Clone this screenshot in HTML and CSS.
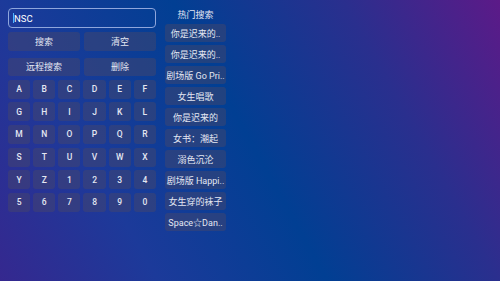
FILE: index.html
```html
<!DOCTYPE html>
<html>

<head>
  <title>搜索</title>
  <link rel="stylesheet" href="styles.css">
</head>

<body>
  <div id="page">
    <div id="leftPanel">
      <div id="searchBox"><span class="caret"></span>NSC</div>
      <div id="actions">
        <button class="btn">搜索</button>
        <button class="btn">清空</button>
        <button class="btn">远程搜索</button>
        <button class="btn">删除</button>
      </div>
      <div id="keyboard"></div>
    </div>
    <div id="hotPanel">
      <div id="hotTitle">热门搜索</div>
      <ul id="hotList"></ul>
    </div>
  </div>
  <script>
    var keys = 'ABCDEFGHIJKLMNOPQRSTUVWXYZ1234567890'.split('');
    var keyboard = document.getElementById('keyboard');
    keys.forEach(k => {
      var b = document.createElement('button');
      b.className = 'btn key';
      b.textContent = k;
      keyboard.appendChild(b);
    });

    var hot = ['你是迟来的..', '你是迟来的..', '剧场版 Go Pri..', '女生唱歌', '你是迟来的',
      '女书：潮起', '溺色沉沦', '剧场版 Happi..', '女生穿的袜子', 'Space☆Dan..'];
    var hotList = document.getElementById('hotList');
    hot.forEach(t => {
      var li = document.createElement('li');
      li.className = 'btn hotItem';
      li.textContent = t;
      hotList.appendChild(li);
    });
  </script>
</body>

</html>
```

FILE: styles.css
```css
html, body {
  height: 100%;
}
body {
  margin: 0;
  overflow: hidden;
  font-family: Roboto, "Noto Sans CJK SC", sans-serif;
  color: #e4e7f2;
  background: linear-gradient(61deg, #35288f 0%, #1c3a9a 24%, #013f93 50%, #2a2f8e 76%, #5c1a88 100%);
}
#page {
  display: flex;
  gap: 9px;
  padding: 8px;
}
#leftPanel {
  width: 148px;
  display: flex;
  flex-direction: column;
}
#searchBox {
  height: 20px;
  box-sizing: border-box;
  border: 1px solid #8fa6dc;
  border-radius: 4px;
  display: flex;
  align-items: center;
  padding-left: 4px;
  font-size: 9.5px;
  color: #ffffff;
}
.caret {
  display: inline-block;
  width: 1px;
  height: 10px;
  background: #4fb6ff;
}
.btn {
  border: none;
  margin: 0;
  padding: 0;
  font-family: Roboto, "Noto Sans CJK SC", sans-serif;
  color: #e4e7f2;
  background: rgba(74, 72, 104, 0.45);
  border-radius: 3px;
  display: flex;
  justify-content: center;
  align-items: center;
}
#actions {
  display: grid;
  grid-template-columns: 1fr 1fr;
  column-gap: 4px;
  row-gap: 7px;
  margin-top: 4px;
}
#actions > .btn {
  height: 18.5px;
  font-size: 9px;
}
#keyboard {
  display: grid;
  grid-template-columns: repeat(6, 1fr);
  column-gap: 3px;
  row-gap: 3.7px;
  margin-top: 3.5px;
}
.key {
  height: 19px;
  font-size: 8.5px;
  font-weight: 500;
}
#hotPanel {
  width: 61px;
  display: flex;
  flex-direction: column;
}
#hotTitle {
  height: 16px;
  font-size: 9px;
  text-align: center;
  line-height: 14px;
}
#hotList {
  list-style-type: none;
  margin: 0;
  padding: 0;
  display: flex;
  flex-direction: column;
  gap: 3px;
}
.hotItem {
  height: 18px;
  font-size: 9px;
  white-space: nowrap;
}
```
